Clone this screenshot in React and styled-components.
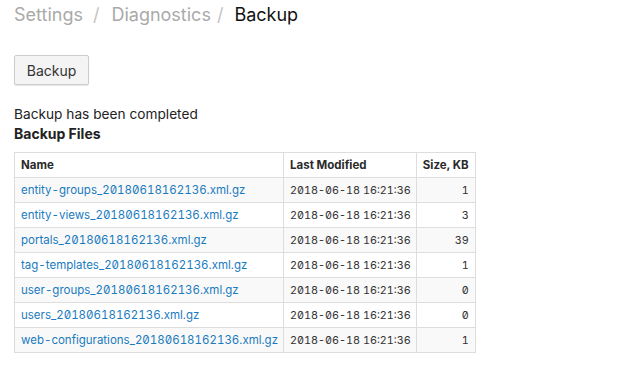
import React from "react";
import styled, { createGlobalStyle } from "styled-components";

const Global = createGlobalStyle`
  html, body { margin: 0; padding: 0; background: #fff; }
  body { font-family: Inter, "Noto Sans", sans-serif; color: #222; }
`;

const Page = styled.div`
  padding: 0 14px;
`;

const Crumbs = styled.div`
  display: flex;
  align-items: baseline;
  font-size: 18px;
  line-height: 24px;
  padding-top: 3px;
  color: #aaa;
`;

const Crumb = styled.span`
  color: ${(p) => (p.$current ? "#111" : "#aaa")};
`;

const Sep = styled.span`
  color: #c4c4c4;
  margin: 0 ${(p) => p.$r}px 0 ${(p) => p.$l}px;
`;

const Button = styled.button`
  display: block;
  margin-top: 28px;
  height: 30px;
  width: 75px;
  font-family: inherit;
  font-size: 14px;
  color: #333;
  background: #f4f4f4;
  border: 1px solid #ccc;
  border-radius: 2px;
  box-shadow: 0 1px 1px rgba(0, 0, 0, 0.1);
  padding: 0;
`;

const Status = styled.div`
  margin-top: 20px;
  font-size: 13.7px;
  line-height: 19px;
  color: #222;
`;

const Title = styled.div`
  font-size: 14px;
  font-weight: 700;
  line-height: 19px;
  color: #222;
`;

const Table = styled.table`
  margin-top: 9px;
  border-collapse: collapse;
`;

const Th = styled.th`
  border: 1px solid #ddd;
  height: 24px;
  padding: 0 6px;
  font-size: 11.5px;
  font-weight: 700;
  color: #2a2a2a;
  text-align: left;
  white-space: nowrap;
`;

const Tr = styled.tr`
  background: ${(p) => (p.$odd ? "#f9f9f9" : "#fff")};
`;

const Td = styled.td`
  border: 1px solid #ddd;
  height: 24px;
  padding: 0 ${(p) => (p.$right ? 6 : 5)}px 0 6px;
  font-size: 10.8px;
  color: #333;
  white-space: nowrap;
  text-align: ${(p) => (p.$right ? "right" : "left")};
  font-feature-settings: "tnum", "zero";
`;

const Link = styled.a`
  color: #1a7bbf;
  font-size: 11.5px;
  text-decoration: none;
  font-feature-settings: "tnum", "zero";
`;

const files = [
  ["entity-groups_20180618162136.xml.gz", "1"],
  ["entity-views_20180618162136.xml.gz", "3"],
  ["portals_20180618162136.xml.gz", "39"],
  ["tag-templates_20180618162136.xml.gz", "1"],
  ["user-groups_20180618162136.xml.gz", "0"],
  ["users_20180618162136.xml.gz", "0"],
  ["web-configurations_20180618162136.xml.gz", "1"],
];

export default function App() {
  return (
    <Page>
      <Global />
      <Crumbs>
        <Crumb>Settings</Crumb>
        <Sep $l={10} $r={12}>/</Sep>
        <Crumb>Diagnostics</Crumb>
        <Sep $l={6} $r={11}>/</Sep>
        <Crumb $current>Backup</Crumb>
      </Crumbs>
      <Button>Backup</Button>
      <Status>Backup has been completed</Status>
      <Title>Backup Files</Title>
      <Table>
        <thead>
          <tr>
            <Th>Name</Th>
            <Th>Last Modified</Th>
            <Th>Size, KB</Th>
          </tr>
        </thead>
        <tbody>
          {files.map(([name, size], i) => (
            <Tr key={name} $odd={i % 2 === 0}>
              <Td>
                <Link href="#">{name}</Link>
              </Td>
              <Td>2018-06-18 16:21:36</Td>
              <Td $right>{size}</Td>
            </Tr>
          ))}
        </tbody>
      </Table>
    </Page>
  );
}
